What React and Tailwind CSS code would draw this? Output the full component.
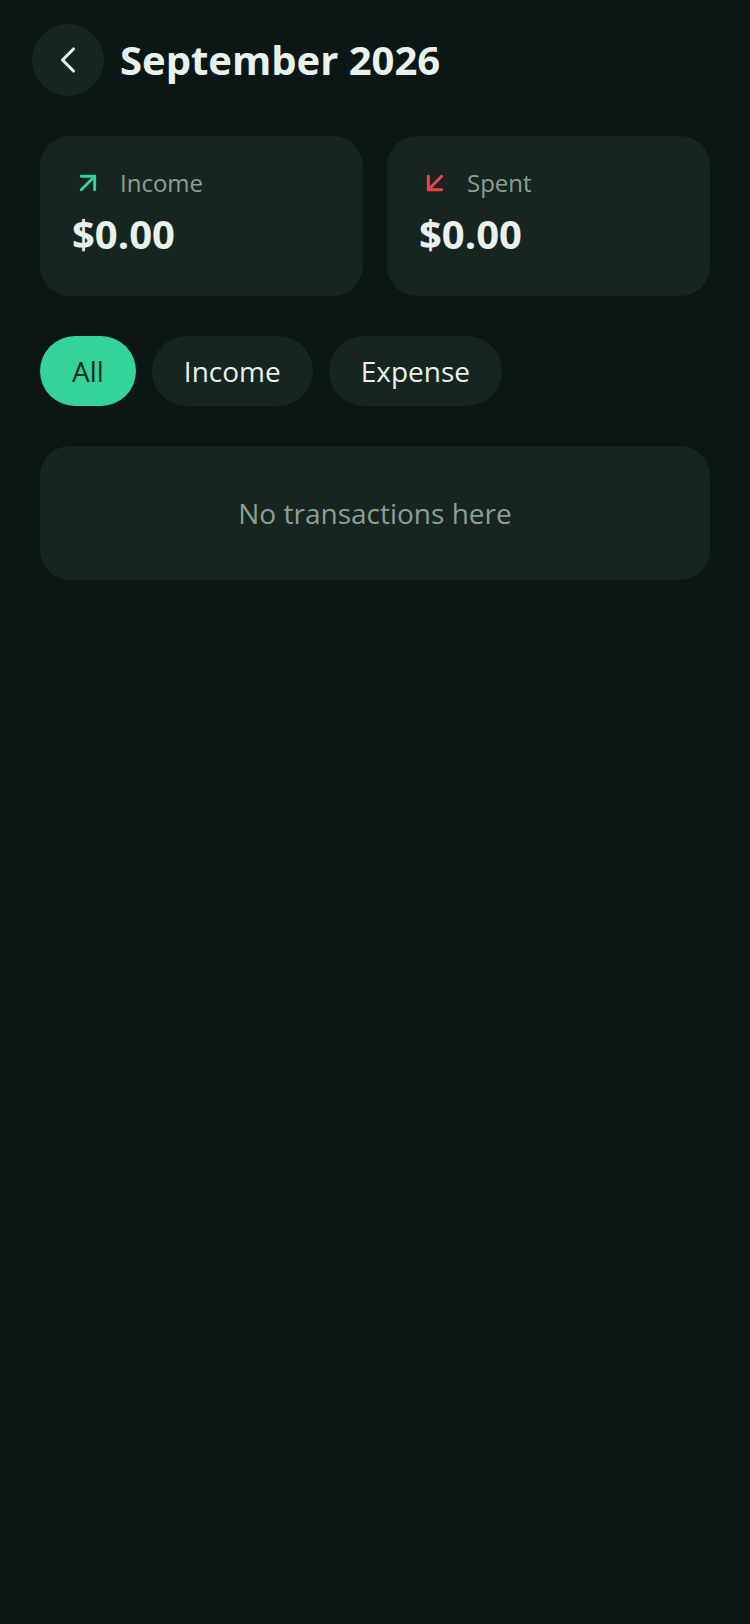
import React, { useState } from 'react';
import { ArrowDownLeft, ArrowUpRight, ChevronLeft } from 'lucide-react';

const StatCard = ({ label, amount, icon }) => (
  <div className="flex-1 rounded-[30px] bg-[#16251f] px-8 pt-[31px] pb-[42px]">
    <div className="flex h-8 items-center gap-4">
      {icon}
      <span className="text-[24px] text-[#8c9f96]">{label}</span>
    </div>
    <div className="mt-[15px] text-[40px] font-bold leading-none text-[#e8f1ec]">{amount}</div>
  </div>
);

const App = () => {
  const [filter, setFilter] = useState('All');
  const filters = ['All', 'Income', 'Expense'];

  return (
    <div
      className="min-h-[1624px] w-full bg-[#0b1714] pt-6"
      style={{ fontFamily: '"Open Sans", "Noto Sans", sans-serif' }}
    >
      <div className="flex items-center gap-4 px-8">
        <button className="flex h-[72px] w-[72px] items-center justify-center rounded-full bg-[#16251f] text-[#e8f1ec]">
          <ChevronLeft size={44} strokeWidth={1.7} />
        </button>
        <h1 className="text-[40px] font-bold text-[#e8f1ec]">September 2026</h1>
      </div>

      <div className="mt-10 flex flex-col gap-10 px-10">
        <div className="flex gap-6">
          <StatCard
            label="Income"
            amount="$0.00"
            icon={<ArrowUpRight size={32} strokeWidth={2.2} className="text-[#34d399]" />}
          />
          <StatCard
            label="Spent"
            amount="$0.00"
            icon={<ArrowDownLeft size={32} strokeWidth={2.2} className="text-[#ef4444]" />}
          />
        </div>

        <div className="flex gap-4">
          {filters.map((f) => (
            <button
              key={f}
              onClick={() => setFilter(f)}
              className={
                filter === f
                  ? 'h-[70px] rounded-full bg-[#34d399] px-8 text-[28px] text-[#0b2a1f]'
                  : 'h-[70px] rounded-full bg-[#16251f] px-8 text-[28px] text-[#e8f1ec]'
              }
            >
              {f}
            </button>
          ))}
        </div>

        <div className="flex h-[134px] items-center justify-center rounded-[30px] bg-[#16251f]">
          <span className="text-[28px] text-[#8c9f96]">No transactions here</span>
        </div>
      </div>
    </div>
  );
};

export default App;
